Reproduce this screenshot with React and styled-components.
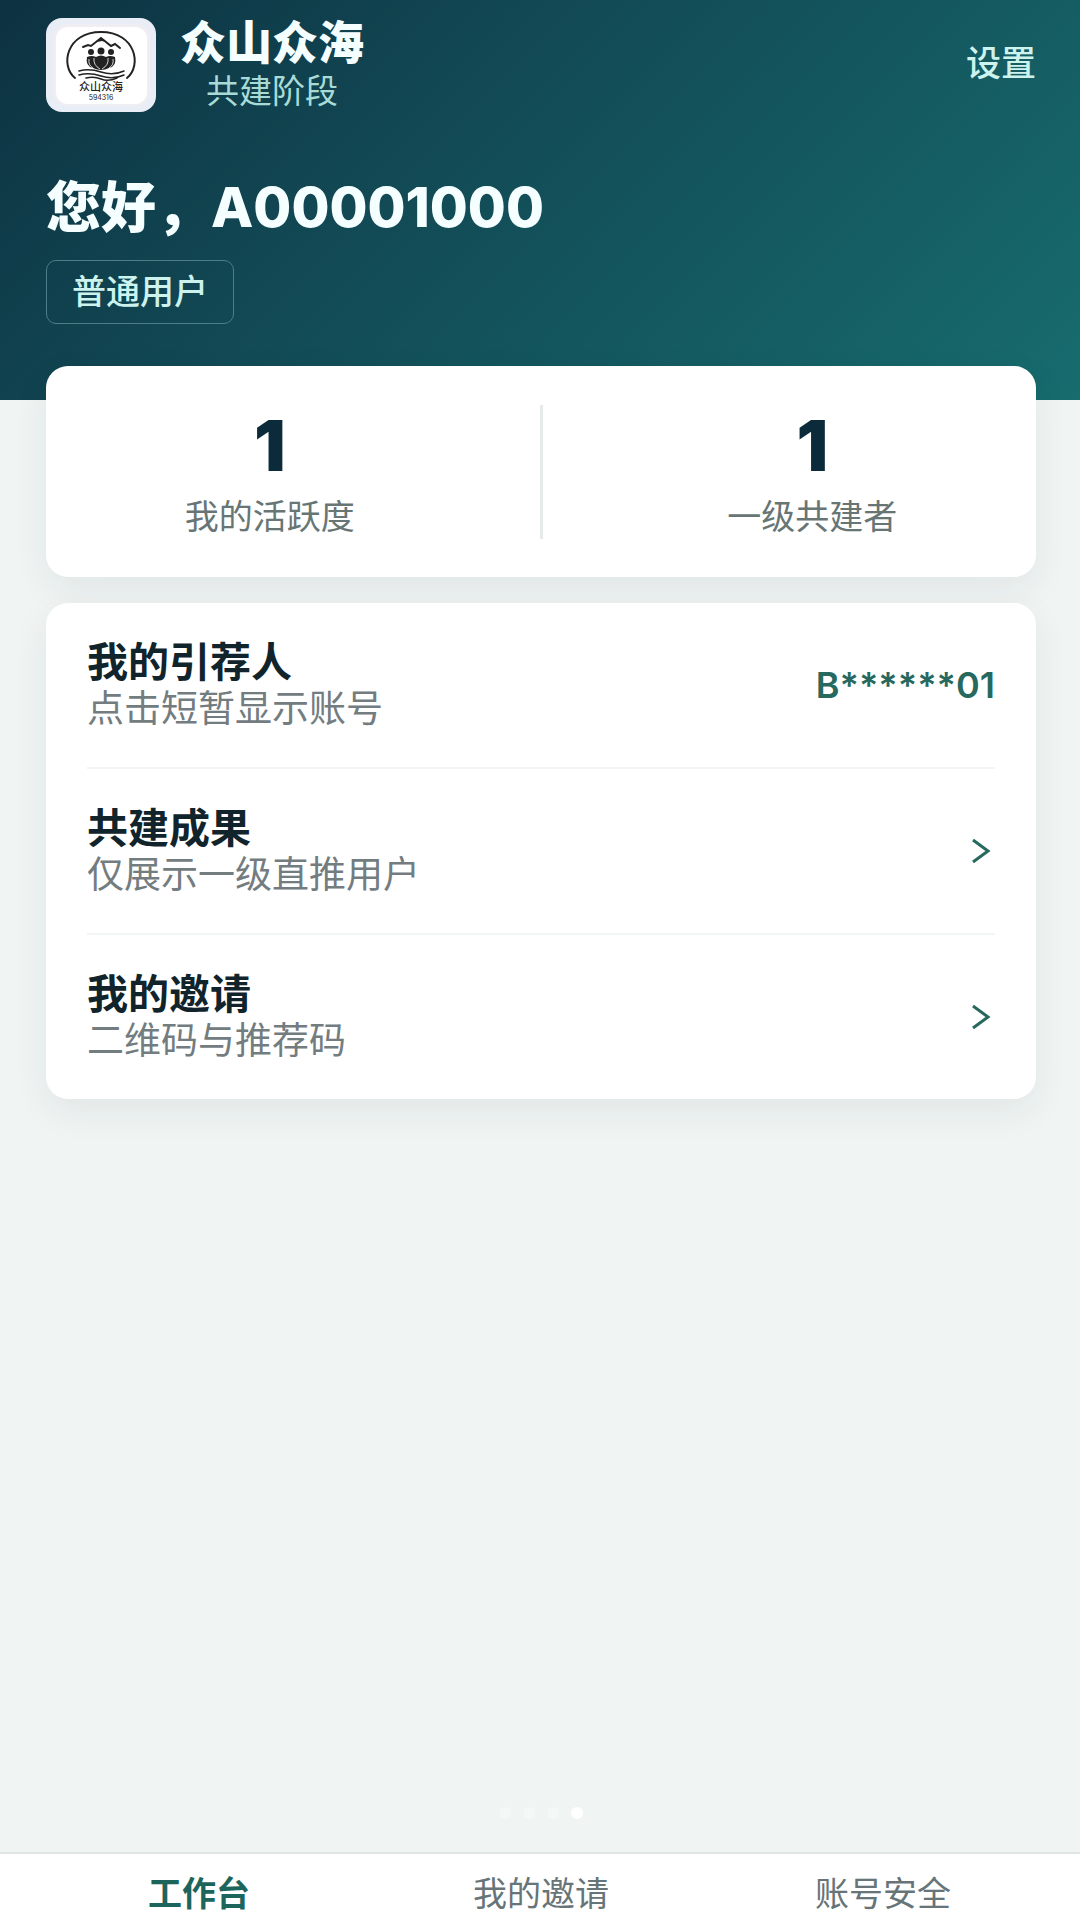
import React from 'react';
import styled, { createGlobalStyle } from 'styled-components';

const GlobalStyle = createGlobalStyle`
	* {
		box-sizing: border-box;
	}

	body {
		margin: 0;
		background: #f0f5f4;
		font-family: Inter, 'Noto Sans CJK SC', sans-serif;
	}

	button {
		font-family: inherit;
		border: 0;
		padding: 0;
		background: none;
		cursor: pointer;
	}
`

const Page = styled.div`
	display: flex;
	flex-direction: column;
	min-height: 100vh;
`

const Header = styled.header`
	padding: 16px 44px 76px 46px;
	background: linear-gradient(135deg, #0d3242 0%, #124a55 40%, #176c6e 100%);
`

const TopBar = styled.div`
	display: flex;
	align-items: center;
	justify-content: space-between;
`

const Brand = styled.div`
	display: flex;
	align-items: center;
	gap: 24px;
`

const Logo = styled.svg`
	display: block;
	width: 110px;
	height: 94px;
`

const BrandText = styled.div`
	display: flex;
	flex-direction: column;
	align-items: center;
`

const BrandName = styled.h1`
	margin: 0;
	font-size: 46px;
	line-height: 52px;
	font-weight: 900;
	color: #f5ffff;
`

const Stage = styled.p`
	margin: 0;
	font-size: 33px;
	line-height: 46px;
	color: #a9dbd6;
`

const Settings = styled.button`
	margin-bottom: 4px;
	font-size: 35px;
	line-height: 44px;
	font-weight: 500;
	color: #cdf3ef;
`

const Greeting = styled.h2`
	margin: 60px 0 20px;
	font-size: 55px;
	line-height: 66px;
	font-weight: 800;
	color: #f5ffff;
`

const Badge = styled.span`
	display: inline-block;
	padding: 8px 25px;
	border: 1px solid #4d7d88;
	border-radius: 10px;
	font-size: 34px;
	line-height: 46px;
	font-weight: 500;
	color: #cdf3ef;
`

const Main = styled.main`
	display: flex;
	flex: 1;
	flex-direction: column;
	gap: 26px;
	margin-top: -34px;
	padding: 0 44px 33px 46px;
`

const Card = styled.section`
	border-radius: 22px;
	background: #ffffff;
	box-shadow: 0 12px 36px rgba(30, 45, 45, 0.07);
`

const Stats = styled(Card)`
	display: flex;
	padding: 39px 0 38px;
`

const Stat = styled.div`
	flex: 1;
	text-align: center;
`

const StatDivider = styled.div`
	width: 3px;
	margin: 0 46px;
	background: #e5ebea;
`

const StatValue = styled.div`
	font-size: 70px;
	line-height: 82px;
	font-weight: 900;
	color: #0b2a3a;
`

const StatLabel = styled.div`
	padding-top: 8px;
	font-size: 34px;
	line-height: 44px;
	color: #677575;
`

const List = styled(Card)`
	padding: 0 41px;
`

const Row = styled.button`
	display: flex;
	align-items: center;
	justify-content: space-between;
	width: 100%;
	padding: 35px 0;
	text-align: left;

	&:not(:last-child) {
		border-bottom: 2px solid #f2f5f5;
	}
`

const RowTitle = styled.span`
	display: block;
	font-size: 41px;
	line-height: 48px;
	font-weight: 700;
	color: #11242b;
`

const RowNote = styled.span`
	display: block;
	font-size: 37px;
	line-height: 46px;
	color: #737c7f;
`

const Account = styled.span`
	font-size: 36px;
	line-height: 44px;
	font-weight: 600;
	color: #27695e;
`

const Arrow = styled.svg`
	width: 32px;
	height: 32px;
	fill: none;
	stroke: #27695e;
	stroke-width: 3;
`

const Dots = styled.div`
	display: flex;
	justify-content: center;
	gap: 12px;
	margin-top: auto;
`

const Dot = styled.span`
	width: 12px;
	height: 12px;
	border-radius: 50%;
	background: ${props => props.$active ? '#ffffff' : '#f4f8f7'};
`

const TabBar = styled.nav`
	display: flex;
	padding: 17px 26px 3px 28px;
	border-top: 2px solid #dfe6e5;
	background: #ffffff;
`

const Tab = styled.a`
	flex: 1;
	font-size: 34px;
	line-height: 46px;
	font-weight: ${props => props.$active ? 700 : 400};
	text-align: center;
	text-decoration: none;
	color: ${props => props.$active ? '#1c655c' : '#677478'};
`

const rows = [
	{ title: '我的引荐人', note: '点击短暂显示账号', account: 'B******01' },
	{ title: '共建成果', note: '仅展示一级直推用户' },
	{ title: '我的邀请', note: '二维码与推荐码' },
]

const BrandLogo = () => (
	<Logo viewBox="0 0 110 94" role="img" aria-label="众山众海">
		<rect width="110" height="94" rx="16" fill="#e9edf6" />
		<rect x="7" y="6" width="97" height="82" rx="15" fill="#f1eef3" />
		<rect x="10" y="9" width="91" height="77" rx="12" fill="#ffffff" />
		<g fill="none" stroke="#222222" strokeLinecap="round">
			<path d="M29 60 C14 48 20 14 55 14 C90 14 96 48 81 60" strokeWidth="2" />
			<path d="M37 29 L42 27 L45 28 L55 20 L60 24 L65 28 L69 26 L74 30" strokeWidth="2" />
			<path d="M33 53 Q43 50 55 54 T78 53" strokeWidth="1.5" />
			<path d="M33 57 Q43 54 55 58 T78 57" strokeWidth="1.5" />
			<path d="M40 60 Q48 58 55 61 T71 60" strokeWidth="1.5" />
		</g>
		<g fill="#222222">
			<path d="M51 24 L55 20 L60 24 L56 23 Z" />
			<circle cx="45" cy="34" r="3" />
			<circle cx="55" cy="33" r="3.5" />
			<circle cx="65" cy="34" r="3" />
			<path d="M41 39 Q46 37 50 39 Q55 36 60 39 Q64 37 69 39 Q71 48 63 50 Q55 54 47 50 Q39 48 41 39 Z" />
		</g>
		<path d="M48 40 Q47 47 54 51 M62 40 Q63 47 56 51 M43 41 Q42 47 47 50 M67 41 Q68 47 63 50" fill="none" stroke="#ffffff" strokeWidth="0.8" />
		<text x="55" y="73" textAnchor="middle" fontSize="11" fontWeight="500" fill="#222222">众山众海</text>
		<text x="55" y="82" textAnchor="middle" fontSize="7" fill="#222222">594316</text>
	</Logo>
)

const App = () => (
	<Page>
		<GlobalStyle />
		<Header>
			<TopBar>
				<Brand>
					<BrandLogo />
					<BrandText>
						<BrandName>众山众海</BrandName>
						<Stage>共建阶段</Stage>
					</BrandText>
				</Brand>
				<Settings type="button">设置</Settings>
			</TopBar>
			<Greeting>您好，A00001000</Greeting>
			<Badge>普通用户</Badge>
		</Header>
		<Main>
			<Stats>
				<Stat>
					<StatValue>1</StatValue>
					<StatLabel>我的活跃度</StatLabel>
				</Stat>
				<StatDivider />
				<Stat>
					<StatValue>1</StatValue>
					<StatLabel>一级共建者</StatLabel>
				</Stat>
			</Stats>
			<List>
				{rows.map(row => (
					<Row type="button" key={row.title}>
						<span>
							<RowTitle>{row.title}</RowTitle>
							<RowNote>{row.note}</RowNote>
						</span>
						{row.account ? (
							<Account>{row.account}</Account>
						) : (
							<Arrow viewBox="0 0 32 32" aria-hidden="true">
								<path d="M10 5 L25 16 L10 27" />
							</Arrow>
						)}
					</Row>
				))}
			</List>
			<Dots>
				<Dot />
				<Dot />
				<Dot />
				<Dot $active />
			</Dots>
		</Main>
		<TabBar>
			<Tab href="#workbench" $active>工作台</Tab>
			<Tab href="#invite">我的邀请</Tab>
			<Tab href="#security">账号安全</Tab>
		</TabBar>
	</Page>
)

export default App;
